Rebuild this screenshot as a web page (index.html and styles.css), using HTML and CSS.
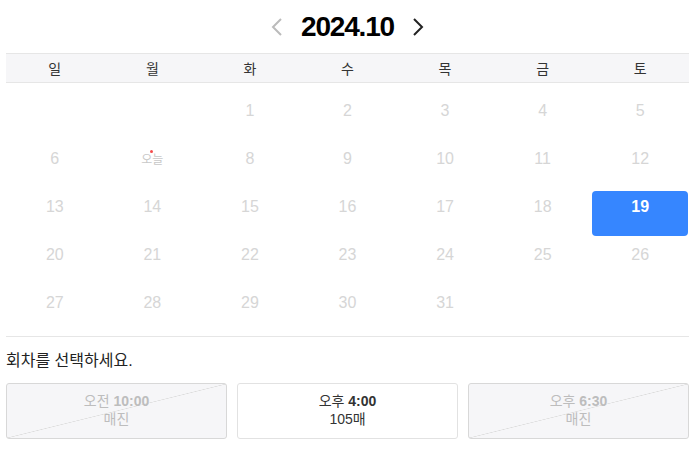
FILE: index.html
```html
<!DOCTYPE html>
<html lang="ko">
<head>
    <meta charset="UTF-8">
    <meta name="viewport" content="width=device-width, initial-scale=1.0">
    <title>회차 선택</title>
    <link rel="stylesheet" href="styles.css">
</head>
<body>
    <div class="booking">
        <div class="cal-head">
            <button class="nav prev" aria-label="이전 달">
                <svg width="12" height="20" viewBox="0 0 12 20"><polyline points="10,2 2,10 10,18" fill="none" stroke="currentColor" stroke-width="2"/></svg>
            </button>
            <h1 class="month">2024.10</h1>
            <button class="nav next" aria-label="다음 달">
                <svg width="12" height="20" viewBox="0 0 12 20"><polyline points="2,2 10,10 2,18" fill="none" stroke="currentColor" stroke-width="2"/></svg>
            </button>
        </div>

        <div class="weekdays">
            <span>일</span><span>월</span><span>화</span><span>수</span><span>목</span><span>금</span><span>토</span>
        </div>

        <div class="days">
            <span class="day empty"></span>
            <span class="day empty"></span>
            <span class="day">1</span>
            <span class="day">2</span>
            <span class="day">3</span>
            <span class="day">4</span>
            <span class="day">5</span>

            <span class="day">6</span>
            <span class="day today"><em>오늘</em></span>
            <span class="day">8</span>
            <span class="day">9</span>
            <span class="day">10</span>
            <span class="day">11</span>
            <span class="day">12</span>

            <span class="day">13</span>
            <span class="day">14</span>
            <span class="day">15</span>
            <span class="day">16</span>
            <span class="day">17</span>
            <span class="day">18</span>
            <span class="day selected">19</span>

            <span class="day">20</span>
            <span class="day">21</span>
            <span class="day">22</span>
            <span class="day">23</span>
            <span class="day">24</span>
            <span class="day">25</span>
            <span class="day">26</span>

            <span class="day">27</span>
            <span class="day">28</span>
            <span class="day">29</span>
            <span class="day">30</span>
            <span class="day">31</span>
            <span class="day empty"></span>
            <span class="day empty"></span>
        </div>

        <p class="session-title">회차를 선택하세요.</p>

        <div class="sessions">
            <button class="session soldout" disabled>
                <span class="time">오전 <b>10:00</b></span>
                <span class="seats">매진</span>
            </button>
            <button class="session">
                <span class="time">오후 <b>4:00</b></span>
                <span class="seats">105매</span>
            </button>
            <button class="session soldout" disabled>
                <span class="time">오후 <b>6:30</b></span>
                <span class="seats">매진</span>
            </button>
        </div>
    </div>
</body>
</html>
```

FILE: styles.css
```css
body {
    margin: 0;
    font-family: "Liberation Sans", Arial, "Noto Sans CJK KR", sans-serif;
    color: #222;
    background: #fff;
}
.booking {
    width: 683px;
    padding-left: 6px;
}
.cal-head {
    display: flex;
    justify-content: center;
    align-items: center;
    gap: 18px;
    height: 53px;
}
.month {
    margin: 0;
    font-size: 28px;
    font-weight: bold;
    letter-spacing: -1.2px;
    color: #000;
    line-height: 1;
}
.nav {
    display: flex;
    padding: 0;
    border: none;
    background: none;
    cursor: pointer;
}
.nav.prev {
    color: #bbb;
}
.nav.next {
    color: #222;
}
.weekdays {
    display: grid;
    grid-template-columns: repeat(7, 1fr);
    height: 28px;
    align-items: center;
    background: #f6f6f8;
    border-top: 1px solid #e6e6e6;
    border-bottom: 1px solid #e6e6e6;
    font-size: 14px;
    color: #333;
    text-align: center;
}
.days {
    display: grid;
    grid-template-columns: repeat(7, 1fr);
    grid-auto-rows: 45px;
    row-gap: 3px;
    padding: 12px 0 4px;
    border-bottom: 1px solid #e6e6e6;
}
.day {
    margin: 0 1px;
    padding-top: 7px;
    line-height: 18px;
    font-size: 16px;
    color: #d6d6d6;
    text-align: center;
    border-radius: 4px;
}
.day.today em {
    position: relative;
    font-style: normal;
    font-size: 12px;
    color: #c8c8c8;
}
.day.today em::before {
    content: "";
    position: absolute;
    top: -3px;
    left: 50%;
    width: 3px;
    height: 3px;
    margin-left: -2px;
    border-radius: 50%;
    background: #f44b4b;
}
.day.selected {
    background: #3686ff;
    color: #fff;
    font-weight: bold;
}
.session-title {
    margin: 12px 0 10px;
    font-size: 16px;
    line-height: 24px;
    color: #222;
}
.sessions {
    display: grid;
    grid-template-columns: repeat(3, 1fr);
    gap: 10px;
}
.session {
    display: flex;
    flex-direction: column;
    align-items: center;
    justify-content: center;
    height: 56px;
    padding: 0 0 3px;
    border: 1px solid #e2e2e2;
    border-radius: 3px;
    background: #fff;
    font-family: inherit;
    font-size: 14px;
    line-height: 18px;
    color: #333;
    cursor: pointer;
}
.session.soldout {
    border-color: #d8d8d8;
    background: #f6f6f8 linear-gradient(to bottom right, transparent calc(50% - 0.6px), #dcdcdc 50%, transparent calc(50% + 0.6px));
    color: #bdbdbd;
    cursor: default;
}
```
